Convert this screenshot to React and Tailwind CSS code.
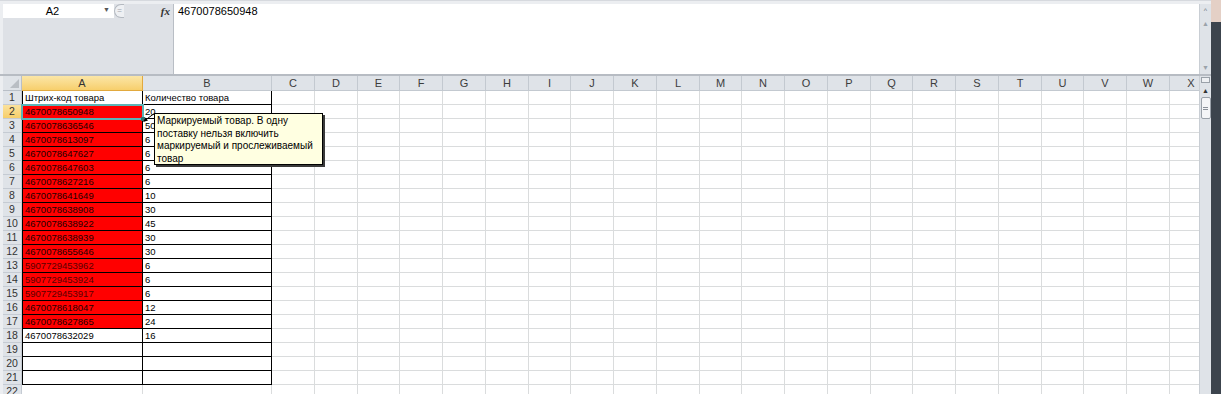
import React from "react";

const COLS = [
  { l: "A", w: "w-[121px]" },
  { l: "B", w: "w-[129px]" },
  { l: "C", w: "w-[43px]" },
  { l: "D", w: "w-[43px]" },
  { l: "E", w: "w-[42px]" },
  { l: "F", w: "w-[43px]" },
  { l: "G", w: "w-[43px]" },
  { l: "H", w: "w-[43px]" },
  { l: "I", w: "w-[42px]" },
  { l: "J", w: "w-[43px]" },
  { l: "K", w: "w-[43px]" },
  { l: "L", w: "w-[43px]" },
  { l: "M", w: "w-[42px]" },
  { l: "N", w: "w-[43px]" },
  { l: "O", w: "w-[43px]" },
  { l: "P", w: "w-[43px]" },
  { l: "Q", w: "w-[42px]" },
  { l: "R", w: "w-[43px]" },
  { l: "S", w: "w-[43px]" },
  { l: "T", w: "w-[43px]" },
  { l: "U", w: "w-[42px]" },
  { l: "V", w: "w-[43px]" },
  { l: "W", w: "w-[43px]" },
  { l: "X", w: "w-[43px]" },
];

const DATA = [
  ["Штрих-код товара", "Количество товара"],
  ["4670078650948", "20"],
  ["4670078636546", "50"],
  ["4670078613097", "6"],
  ["4670078647627", "6"],
  ["4670078647603", "6"],
  ["4670078627216", "6"],
  ["4670078641649", "10"],
  ["4670078638908", "30"],
  ["4670078638922", "45"],
  ["4670078638939", "30"],
  ["4670078655646", "30"],
  ["5907729453962", "6"],
  ["5907729453924", "6"],
  ["5907729453917", "6"],
  ["4670078618047", "12"],
  ["4670078627865", "24"],
  ["4670078632029", "16"],
  ["", ""],
  ["", ""],
  ["", ""],
  ["", ""],
];

function Row({ n, cells }) {
  const red = n >= 2 && n <= 17;
  const boxed = n <= 21;
  const dimText = n >= 13 && n <= 15;
  return (
    <div className="flex h-[14px] shrink-0">
      <div
        className={`w-[19px] shrink-0 flex items-center justify-center border-r border-b border-[#c5cbd3] text-[10.5px] leading-[13px] text-[#333] ${
          n === 2 ? "bg-gradient-to-b from-[#fbe29c] to-[#f6ce6a]" : "bg-[#dfe3e8]"
        }`}
      >
        {n}
      </div>
      {COLS.map((c, i) => {
        let cls = "border-r border-b border-[#dadcdd]";
        if (boxed && i === 0) cls = "border-l border-r border-b border-black";
        if (boxed && i === 1) cls = "border-r border-b border-black";
        const bg = red && i === 0 ? "bg-[#ff0000]" : "bg-white";
        const color = red && i === 0 ? (dimText ? "text-[#580000]" : "text-[#1c0000]") : "text-black";
        return (
          <div
            key={c.l}
            className={`${c.w} shrink-0 ${cls} ${bg} ${color} text-[9.5px] leading-[13px] pl-[2px] overflow-hidden whitespace-nowrap`}
          >
            {i < 2 ? cells[i] : ""}
          </div>
        );
      })}
    </div>
  );
}

export default function App() {
  return (
    <div
      className="w-[1221px] h-[394px] overflow-hidden flex bg-white"
      style={{ fontFamily: '"Liberation Sans", Arial, sans-serif' }}
    >
      <div className="w-[1211px] flex flex-col bg-[#eceef1]">
        {/* Formula bar */}
        <div className="h-[4px] bg-[#eceef1] border-t border-[#d6d9de]" />
        <div className="h-[70px] flex pl-[3px]">
          <div className="w-[171px] bg-[#dee1e6] border-r border-[#b9bec5] flex flex-col">
            <div className="h-[14px] flex items-center">
              <div className="w-[111px] h-[14px] bg-white flex items-center relative pr-[12px]">
                <span className="flex-1 text-center text-[11px] text-black">A2</span>
                <span className="absolute right-[4px] top-[1px] text-[7px] text-[#555]">▼</span>
              </div>
              <div className="w-[10px] h-[14px] rounded-l-full border border-r-0 border-[#b4b9c0] bg-[#eef0f3] flex items-center justify-center text-[8px] text-[#9aa0a8]">
                =
              </div>
              <div className="flex-1" />
              <span
                className="mr-[3px] text-[11px] italic font-bold text-[#333]"
                style={{ fontFamily: '"Liberation Serif", serif' }}
              >
                fx
              </span>
            </div>
          </div>
          <div className="flex-1 bg-white text-[11px] text-black pl-[4px] leading-[14px]">4670078650948</div>
          <div className="w-[12px] bg-[#dfe3e8] border-l border-[#c9ced4] flex flex-col items-center text-[7px] text-[#6b7178]">
            <span className="mt-[3px] leading-none">^</span>
            <span className="mt-[6px] leading-none text-[#9ba2aa]">▲</span>
            <span className="mt-auto mb-[3px] leading-none text-[#9ba2aa]">▼</span>
          </div>
        </div>
        <div className="h-[2px] bg-[#b7bcc3]" />

        {/* Grid */}
        <div className="flex-1 flex min-h-0 relative">
          <div className="w-[3px] bg-[#eceef1]" />
          <div className="flex-1 overflow-hidden flex flex-col">
            <div className="flex h-[15px] shrink-0">
              <div className="w-[19px] shrink-0 bg-[#dfe3e8] border-r border-b border-[#b9bfc7] relative overflow-hidden">
                <div className="absolute right-[2px] bottom-[2px] w-0 h-0 border-l-[9px] border-l-transparent border-b-[9px] border-b-[#b9bec4]" />
              </div>
              {COLS.map((c) => (
                <div
                  key={c.l}
                  className={`${c.w} shrink-0 flex items-center justify-center border-r border-b text-[11px] ${
                    c.l === "A"
                      ? "bg-gradient-to-b from-[#fbe6a6] to-[#f7cf6c] border-[#e2a93e] text-[#333]"
                      : "bg-[#dfe3e8] border-[#c3c9d0] text-[#3c3c3c]"
                  }`}
                >
                  {c.l}
                </div>
              ))}
            </div>
            {DATA.map((r, i) => (
              <Row key={i} n={i + 1} cells={r} />
            ))}
          </div>
          <div className="w-[12px] bg-[#dfe3e8] border-l border-[#c9ced4] flex flex-col items-center">
            <div className="mt-[1px] w-[9px] h-[6px] border border-[#9aa1a9] bg-[#eef0f3]" />
            <span className="mt-[4px] text-[7px] leading-none text-[#333]">▲</span>
            <div className="mt-[3px] w-[10px] h-[22px] bg-[#f4f5f7] border border-[#9aa1a9] rounded-[2px] flex flex-col items-center justify-center gap-[1px]">
              <div className="w-[5px] h-px bg-[#8a9099]" />
              <div className="w-[5px] h-px bg-[#8a9099]" />
            </div>
          </div>

          {/* Selection on A2 */}
          <div className="absolute left-[21px] top-[28px] w-[123px] h-[16px] border-2 border-[#5cb4b6]" />
          <div className="absolute left-[141px] top-[41px] w-[4px] h-[4px] bg-[#2f6f70]" />

          {/* Comment arrow */}
          <svg className="absolute left-[142px] top-[36px]" width="16" height="12" viewBox="0 0 16 12">
            <line x1="2" y1="9" x2="13" y2="1" stroke="#000" strokeWidth="1" />
            <polygon points="1,10 6,8.5 3.5,5.5" fill="#000" />
          </svg>

          {/* Comment */}
          <div className="absolute left-[154px] top-[37px] w-[169px] h-[52px] bg-[#ffffe1] border border-black shadow-[2px_2px_0_#3a3a3a] px-[2px] pt-[1px] text-[10px] leading-[12.5px] text-black whitespace-nowrap overflow-hidden">
            Маркируемый товар. В одну
            <br />
            поставку нельзя включить
            <br />
            маркируемый и прослеживаемый
            <br />
            товар
          </div>
        </div>
      </div>
      <div className="w-[10px] flex flex-col">
        <div className="h-[22px] bg-[#e4d0c6]" />
        <div className="flex-1 bg-[#3c444d]" />
      </div>
    </div>
  );
}
